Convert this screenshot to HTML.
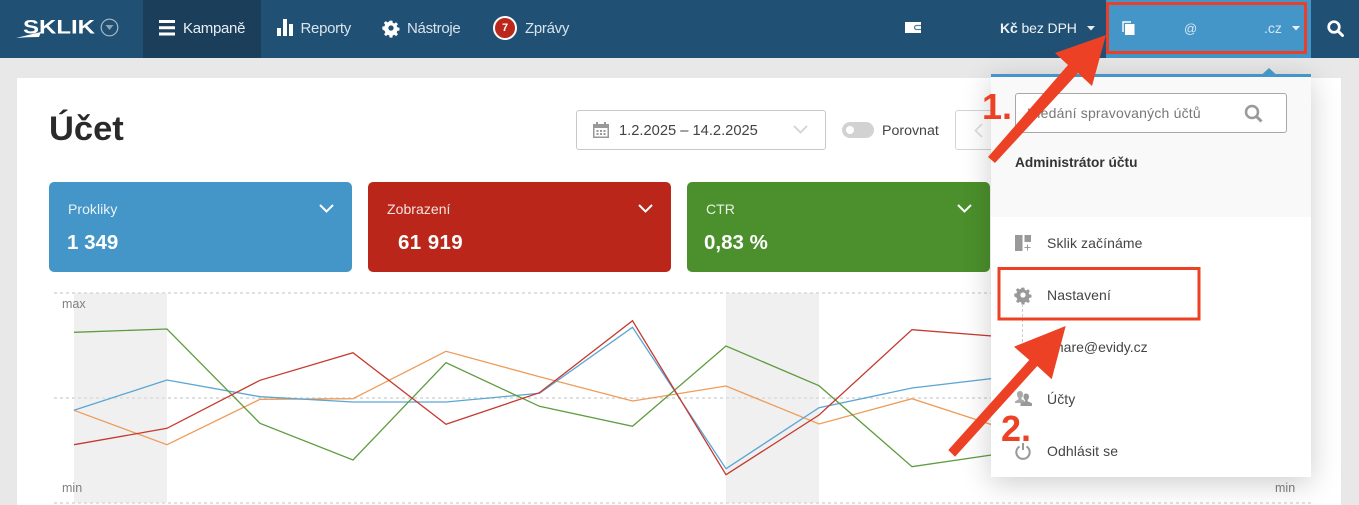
<!DOCTYPE html>
<html lang="cs"><head><meta charset="utf-8"><title>Sklik</title>
<style>
*{box-sizing:border-box}
html,body{margin:0;padding:0}
body{width:1359px;height:505px;overflow:hidden;position:relative;background:#e8e8e8;font-family:"Liberation Sans",sans-serif;color:#333}
.a{position:absolute;white-space:nowrap}
svg{position:absolute;overflow:visible}
.nav{color:#d9e4ec;font-size:15px;letter-spacing:-.3px;top:20px;line-height:17px}
.card{position:absolute;top:182px;width:303px;height:90px;border-radius:5px;color:#fff}
.card .l{position:absolute;left:19px;top:19px;font-size:14px;letter-spacing:.05px;line-height:17px;opacity:.88}
.card .v{position:absolute;top:49px;font-size:20.500px;line-height:24px;font-weight:bold}
.card svg{left:270px;top:22px}
.mi{left:1047px;font-size:14px;letter-spacing:.1px;line-height:17px;color:#444}
</style></head><body>
<div class="a" style="left:0;top:0;width:1359px;height:58px;background:#205074"></div>
<div class="a" style="left:143px;top:0;width:118px;height:58px;background:#1b3f5b"></div>
<div class="a" style="left:1106px;top:0;width:205px;height:58px;background:#4496c8"></div>

<!-- logo -->
<div class="a" style="left:23px;top:15px;font-size:24px;line-height:26px;font-weight:bold;color:#fff;letter-spacing:0;transform-origin:0 50%;transform:scaleY(.8)">SKLIK</div>
<svg style="left:0;top:0" width="130" height="58"><path d="M16 38Q28 35 41 32L39 37Q26 37 16 38Z" fill="#fff"/><circle cx="109.500" cy="27.500" r="8.300" fill="none" stroke="#a9bac7" stroke-width="1.200"/><path d="M105.500 25h8l-4 5z" fill="#8fa3b2"/></svg>

<!-- nav icons -->
<svg style="left:159px;top:20px" width="16" height="16"><path d="M0 0h16v3H0zM0 6.200h16v3H0zM0 12.500h16v3H0z" fill="#fff"/></svg>
<div class="a nav" style="left:183px;color:#e8eef3">Kampaně</div>
<svg style="left:277px;top:19px" width="16" height="17"><path d="M0 9h4v8H0zM6 0h4v17H6zM12 5h4v12h-4z" fill="#fff"/></svg>
<div class="a nav" style="left:300.500px">Reporty</div>
<svg style="left:383px;top:20px" width="16" height="16" viewBox="0 0 24 24"><path fill="#fff" fill-rule="evenodd" d="M10 1h4l.6 3.200 2.300 1 2.700-1.900 2.800 2.800-1.900 2.700 1 2.300 3.200.6v4l-3.200.6-1 2.300 1.900 2.700-2.800 2.800-2.700-1.900-2.300 1-.6 3.200h-4l-.6-3.200-2.300-1-2.700 1.900-2.800-2.800 1.900-2.700-1-2.300L-1 14v-4l3.200-.6 1-2.300-1.900-2.700 2.800-2.800 2.700 1.900 2.300-1zM12 8a4 4 0 1 0 0 8 4 4 0 0 0 0-8z"/></svg>
<div class="a nav" style="left:407px">Nástroje</div>
<div class="a" style="left:493px;top:16px;width:24px;height:24px;border-radius:50%;background:#bb271a;border:2px solid #fff;color:#fff;font-size:11px;font-weight:bold;text-align:center;line-height:20px">7</div>
<div class="a nav" style="left:525px">Zprávy</div>

<!-- right nav -->
<svg style="left:905px;top:22px" width="17" height="12"><path d="M0 0h16v11H0z" fill="#fff"/><path d="M16 3.500h-4.500a2 2 0 0 0 0 4H16" fill="none" stroke="#5a7f9a" stroke-width="1.300"/></svg>
<div class="a nav" style="left:1000px;color:#eef2f5;font-size:14px;letter-spacing:-.1px"><b>Kč</b> bez DPH</div>
<svg style="left:1087px;top:26px" width="9" height="5"><path d="M0 0h8l-4 4.500z" fill="#e8eef3"/></svg>
<svg style="left:1122px;top:21px" width="14" height="15"><path d="M1 11V1h8" fill="none" stroke="#fff" stroke-width="1.400"/><path d="M3 3h9.500v11H3z" fill="#fff"/></svg>
<div class="a" style="left:1184px;top:20px;font-size:13px;line-height:17px;color:#d6e8f3">@</div>
<div class="a" style="left:1264px;top:20px;font-size:14px;line-height:17px;color:#d6e8f3">.cz</div>
<svg style="left:1292px;top:26px" width="9" height="5"><path d="M0 0h8l-4 4.500z" fill="#e8f2f8"/></svg>
<svg style="left:1327px;top:20px" width="17" height="17"><circle cx="7" cy="7" r="5.300" fill="none" stroke="#fff" stroke-width="2.700"/><path d="M11 11l4.500 4.500" stroke="#fff" stroke-width="3" stroke-linecap="round"/></svg>

<!-- main card -->
<div class="a" style="left:17px;top:78px;width:1324px;height:427px;background:#fff"></div>
<div class="a" style="left:49px;top:108px;font-size:34.500px;line-height:42px;font-weight:bold;color:#2a2a2a">Účet</div>

<div class="a" style="left:576px;top:110px;width:250px;height:40px;border:1px solid #c9c9c9;border-radius:3px;background:#fff"></div>
<svg style="left:593px;top:122px" width="16" height="16"><path d="M0 2h16v14H0z" fill="#999"/><path d="M1.500 6h13v8.500h-13z" fill="#fff"/><path d="M3 0h2v3H3zM11 0h2v3h-2z" fill="#999"/><path d="M3.500 8h2v2h-2zM7 8h2v2H7zM10.500 8h2v2h-2zM3.500 11h2v2h-2zM7 11h2v2H7zM10.500 11h2v2h-2z" fill="#999"/></svg>
<div class="a" style="left:619px;top:122px;font-size:14.700px;line-height:18px;color:#444">1.2.2025 – 14.2.2025</div>
<svg style="left:793px;top:125px" width="15" height="9"><path d="M1 1l6.500 6.500L14 1" fill="none" stroke="#d2d2d2" stroke-width="1.800"/></svg>
<div class="a" style="left:842px;top:122px;width:32px;height:16px;border-radius:8px;background:#d2d2d2"></div>
<div class="a" style="left:846px;top:126px;width:8px;height:8px;border-radius:50%;background:#fff"></div>
<div class="a" style="left:882px;top:122px;font-size:14.200px;line-height:18px;color:#444">Porovnat</div>
<div class="a" style="left:955px;top:110px;width:50px;height:40px;border:1px solid #d4d4d4;border-radius:3px;background:#fff"></div>
<svg style="left:974px;top:123px" width="10" height="15"><path d="M8 1L1.500 7.500 8 14" fill="none" stroke="#ddd" stroke-width="1.800"/></svg>

<!-- KPI cards -->
<div class="card" style="left:49px;background:#4496c8"><div class="l">Prokliky</div><div class="v" style="left:18px">1 349</div><svg width="15" height="9"><path d="M1 1l6.500 6.500L14 1" fill="none" stroke="#fff" stroke-width="2"/></svg></div>
<div class="card" style="left:368px;background:#ba271a"><div class="l">Zobrazení</div><div class="v" style="left:30px;letter-spacing:.4px">61 919</div><svg width="15" height="9"><path d="M1 1l6.500 6.500L14 1" fill="none" stroke="#fff" stroke-width="2"/></svg></div>
<div class="card" style="left:687px;background:#4b902c"><div class="l">CTR</div><div class="v" style="left:17px">0,83 %</div><svg width="15" height="9"><path d="M1 1l6.500 6.500L14 1" fill="none" stroke="#fff" stroke-width="2"/></svg></div>

<!-- chart -->
<svg style="left:0;top:0" width="1359" height="505">
<rect x="74" y="293" width="93" height="210" fill="#f0f0f0"/>
<rect x="726" y="293" width="93" height="210" fill="#f0f0f0"/>
<g stroke="#e0e0e0" stroke-width="2" stroke-dasharray="3 3"><path d="M54 293H1311M54 398H1311M54 503H1311"/></g>
<g fill="none" stroke-width="1.300">
<polyline stroke="#ee9c58" points="74,410.300 167,444.700 260,399.300 353,398.700 446,351.300 539.500,376.700 632.500,401 726,386 819,424 912,398.700 1005,429"/>
<polyline stroke="#5ba6d3" points="74,410.300 167,380 260,396.700 353,402 446,402 539.500,393.300 632.500,327.300 726,468.700 819,407.700 912,388 1005,377"/>
<polyline stroke="#5f9c3f" points="74,332.300 167,329 260,423.300 353,460 446,362.700 539.500,406.300 632.500,426.300 726,346 819,385.700 912,466.700 1005,453"/>
<polyline stroke="#c53a2e" points="74,444.700 167,428.300 260,380.300 353,352.700 446,424.300 539.500,392.700 632.500,320.700 726,474.700 819,415 912,329.700 1005,337"/>
</g></svg>
<div class="a" style="left:62px;top:297px;font-size:12.500px;line-height:15px;color:#808080">max</div>
<div class="a" style="left:62px;top:481px;font-size:12.500px;line-height:15px;color:#808080">min</div>
<div class="a" style="left:1275px;top:481px;font-size:12.500px;line-height:15px;color:#808080">min</div>

<!-- dropdown -->
<div class="a" style="left:991px;top:74px;width:320px;height:403px;background:#fff;box-shadow:0 6px 28px rgba(0,0,0,.2)"></div>
<div class="a" style="left:991px;top:74px;width:320px;height:143px;background:#f9f9f9;border-top:3px solid #4496c8"></div>
<svg style="left:1262px;top:68px" width="14" height="7"><path d="M0 6.500L7 0l7 6.500z" fill="#4496c8"/></svg>
<div class="a" style="left:1015px;top:93px;width:272px;height:40px;border:1px solid #a8a8a8;border-radius:3px;background:#fff"></div>
<div class="a" style="left:1027px;top:105px;font-size:14px;letter-spacing:.2px;line-height:17px;color:#777">Hledání spravovaných účtů</div>
<svg style="left:1244px;top:104px" width="19" height="19"><circle cx="8" cy="8" r="6" fill="none" stroke="#999" stroke-width="2.500"/><path d="M12.500 12.500l5 5" stroke="#999" stroke-width="3"/></svg>
<div class="a" style="left:1015px;top:154px;font-size:13.700px;line-height:17px;font-weight:bold;color:#333">Administrátor účtu</div>

<svg style="left:1015px;top:235px" width="17" height="17"><path d="M0 0h7.500v16H0zM9.500 0H16v7H9.500z" fill="#999"/><path d="M12.500 9.500v6M9.500 12.500h6" stroke="#999" stroke-width="1"/></svg>
<div class="a mi" style="top:235px">Sklik začínáme</div>
<svg style="left:1015px;top:287px" width="16" height="16" viewBox="0 0 24 24"><path fill="#999" fill-rule="evenodd" d="M10 1h4l.6 3.200 2.300 1 2.700-1.900 2.800 2.800-1.900 2.700 1 2.300 3.200.6v4l-3.200.6-1 2.300 1.900 2.700-2.800 2.800-2.700-1.900-2.300 1-.6 3.200h-4l-.6-3.200-2.300-1-2.700 1.900-2.800-2.800 1.900-2.700-1-2.300L-1 14v-4l3.200-.6 1-2.300-1.900-2.700 2.800-2.800 2.700 1.900 2.300-1zM12 8a4 4 0 1 0 0 8 4 4 0 0 0 0-8z"/></svg>
<div class="a mi" style="top:287px">Nastavení</div>
<svg style="left:1022px;top:304px" width="2" height="40"><path d="M.5 0v40" stroke="#ccc" stroke-width="1" stroke-dasharray="3 2"/></svg>
<div class="a mi" style="left:1052px;top:339px;letter-spacing:0">mare@evidy.cz</div>
<svg style="left:1015px;top:391px" width="17" height="15"><path d="M5 0c2.200 0 3 1.500 3 3.500 0 1.500-.7 2.700-1.500 3.300v1.500L9 9.500V12H0v-1.500l3.500-2.200V6.800C2.700 6.200 2 5 2 3.500 2 1.500 2.800 0 5 0z" fill="#aaa"/><path d="M11 2.500c2.200 0 3 1.500 3 3.300 0 1.500-.6 2.500-1.400 3.100v1.300l4.400 2V15H5.500v-2.800l4.400-2V8.900c-.8-.6-1.400-1.600-1.400-3.100 0-1.800.4-3.300 2.500-3.300z" fill="#999"/></svg>
<div class="a mi" style="top:391px">Účty</div>
<svg style="left:1015px;top:442px" width="16" height="18"><path d="M4.500 4.500a6.700 6.700 0 1 0 7 0" fill="none" stroke="#999" stroke-width="2"/><path d="M8 1v7" stroke="#999" stroke-width="2"/></svg>
<div class="a mi" style="top:443px">Odhlásit se</div>

<!-- annotations -->
<svg style="left:0;top:0" width="1359" height="505">
<rect x="1107.500" y="3.500" width="198" height="49" fill="none" stroke="#e8402a" stroke-width="3"/>
<rect x="999" y="268.500" width="200" height="50.500" fill="none" stroke="#ec4125" stroke-width="3"/>
<path fill="#ec4125" d="M1106 35L1055 53 1068 65 988 157 995 163 1078 73 1092 86Z"/>
<path fill="#ec4125" d="M1065.700 326L1014 346.700 1029.300 360 948.300 450 955 456.700 1037.300 366 1051.700 379.300Z"/>
</svg>
<div class="a" style="left:982px;top:87px;font-size:36px;line-height:40px;font-weight:bold;color:#ec4125">1.</div>
<div class="a" style="left:1001px;top:409px;font-size:36px;line-height:40px;font-weight:bold;color:#ec4125">2.</div>
</body></html>
